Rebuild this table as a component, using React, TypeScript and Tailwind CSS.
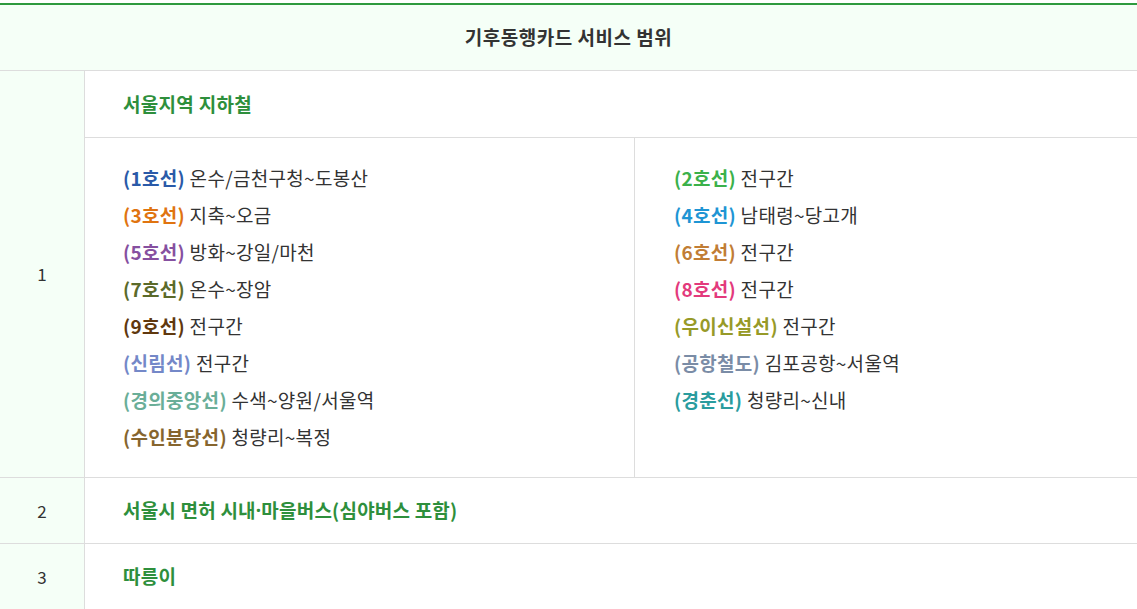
type Line = { name: string; color: string; range: string };

const LEFT_LINES: Line[] = [
  { name: '1호선', color: 'text-[#2a5aa8]', range: '온수/금천구청~도봉산' },
  { name: '3호선', color: 'text-[#e07410]', range: '지축~오금' },
  { name: '5호선', color: 'text-[#8650a0]', range: '방화~강일/마천' },
  { name: '7호선', color: 'text-[#5b6a2a]', range: '온수~장암' },
  { name: '9호선', color: 'text-[#60380e]', range: '전구간' },
  { name: '신림선', color: 'text-[#7488c8]', range: '전구간' },
  { name: '경의중앙선', color: 'text-[#6aae98]', range: '수색~양원/서울역' },
  { name: '수인분당선', color: 'text-[#86652e]', range: '청량리~복정' },
];

const RIGHT_LINES: Line[] = [
  { name: '2호선', color: 'text-[#3bb14a]', range: '전구간' },
  { name: '4호선', color: 'text-[#1e95d4]', range: '남태령~당고개' },
  { name: '6호선', color: 'text-[#c17d35]', range: '전구간' },
  { name: '8호선', color: 'text-[#e33a7c]', range: '전구간' },
  { name: '우이신설선', color: 'text-[#979a28]', range: '전구간' },
  { name: '공항철도', color: 'text-[#7a8ca6]', range: '김포공항~서울역' },
  { name: '경춘선', color: 'text-[#2a9c9e]', range: '청량리~신내' },
];

function LineList({ lines }: { lines: Line[] }) {
  return (
    <ul className="text-[19px] leading-[37px] tracking-[0.3px] text-[#333]">
      {lines.map((line) => (
        <li key={line.name}>
          <span className={`font-bold ${line.color}`}>({line.name})</span> {line.range}
        </li>
      ))}
    </ul>
  );
}

export default function App() {
  return (
    <div
      className="min-h-[609px] bg-white pt-[3px]"
      style={{ fontFamily: '"Noto Sans CJK KR", "Noto Sans", sans-serif' }}
    >
      <div className="border-t-2 border-[#2e9a3e]">
        {/* header */}
        <div className="flex h-[66px] items-center justify-center border-b border-[#dddddd] bg-[#f5fff7] text-[19px] font-bold tracking-[0.5px] text-[#333]">
          기후동행카드 서비스 범위
        </div>

        {/* row 1 */}
        <div className="flex border-b border-[#dddddd]">
          <div className="flex w-[85px] shrink-0 items-center justify-center border-r border-[#dddddd] bg-[#f5fff7] text-[17px] text-[#333]">
            1
          </div>
          <div className="flex-1">
            <div className="flex h-[67px] items-center border-b border-[#dddddd] pl-[38px] text-[19px] font-bold tracking-[0.3px] text-[#2e8f3c]">
              서울지역 지하철
            </div>
            <div className="grid grid-cols-[550px_1fr]">
              <div className="border-r border-[#dddddd] pb-[22px] pl-[38px] pt-[21px]">
                <LineList lines={LEFT_LINES} />
              </div>
              <div className="pb-[22px] pl-[39px] pt-[21px]">
                <LineList lines={RIGHT_LINES} />
              </div>
            </div>
          </div>
        </div>

        {/* row 2 */}
        <div className="flex h-[66px] border-b border-[#dddddd]">
          <div className="flex w-[85px] shrink-0 items-center justify-center border-r border-[#dddddd] bg-[#f5fff7] text-[17px] text-[#333]">
            2
          </div>
          <div className="flex flex-1 items-center pl-[38px] text-[19px] font-bold tracking-[0.2px] text-[#2e8f3c]">
            서울시 면허 시내<span className="font-['Noto_Sans']">·</span>마을버스(심야버스 포함)
          </div>
        </div>

        {/* row 3 */}
        <div className="flex h-[65px]">
          <div className="flex w-[85px] shrink-0 items-center justify-center border-r border-[#dddddd] bg-[#f5fff7] text-[17px] text-[#333]">
            3
          </div>
          <div className="flex flex-1 items-center pl-[38px] text-[19px] font-bold tracking-[0.3px] text-[#2e8f3c]">
            따릉이
          </div>
        </div>
      </div>
    </div>
  );
}
